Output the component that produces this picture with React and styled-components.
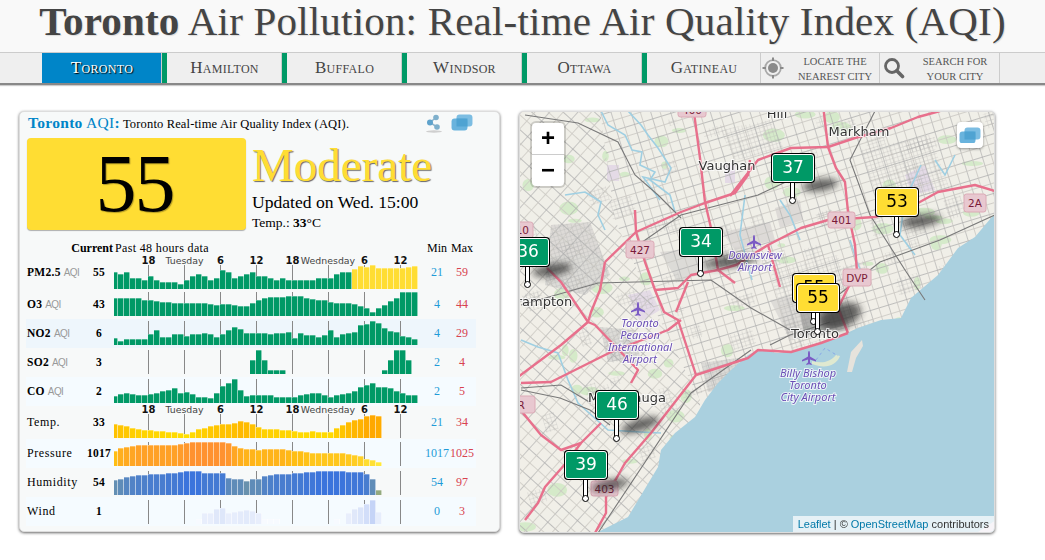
import React from "react";
import styled, { createGlobalStyle } from "styled-components";

const GlobalStyle = createGlobalStyle`
    html, body {
        margin: 0;
        background: #ffffff;
        font-family: "Liberation Serif", serif;
        overflow: hidden;
    }
`;

const GREEN = "#009966";
const YELLOW = "#ffdd33";

function mix(stops, h) {
    let a = stops[0];
    let b = stops[stops.length - 1];
    for (let i = 0; i < stops.length - 1; i++) {
        if (h >= stops[i][0] && h <= stops[i + 1][0]) {
            a = stops[i];
            b = stops[i + 1];
            break;
        }
    }
    const t = b[0] === a[0] ? 0 : Math.min(1, Math.max(0, (h - a[0]) / (b[0] - a[0])));
    const c = [0, 1, 2].map((k) => Math.round(a[1][k] + (b[1][k] - a[1][k]) * t));
    return `rgb(${c[0]},${c[1]},${c[2]})`;
}

const green = () => GREEN;
const pmColor = (i) => (i >= 40 ? YELLOW : GREEN);
const tempColor = (i, h) => mix([[4, [255, 224, 0]], [12, [255, 200, 0]], [23, [255, 168, 0]]], h);
const pressureColor = (i, h) => mix([[4, [255, 232, 60]], [15, [255, 190, 20]], [24, [255, 146, 48]]], h);
const humidityColor = (i, h) => mix([[5, [148, 170, 126]], [16, [95, 140, 184]], [24, [59, 116, 220]]], h);
const windColor = (i, h) => mix([[5, [247, 250, 255]], [11, [232, 238, 252]], [16, [222, 231, 250]], [24, [197, 212, 247]]], h);

const zeros = (n) => Array(n).fill(0);

const rows = [
    {
        name: "PM2.5", aqi: true, bold: true, value: 55, min: 21, max: 59, h: 27, pb: 1, tp: 2, color: pmColor, axis: -8,
        data: [17, 15, 17, 11, 11, 9, 13, 9, 7, 7, 7, 5, 9, 13, 15, 13, 9, 11, 19, 17, 11, 13, 15, 17,
            13, 13, 11, 9, 11, 9, 9, 9, 9, 9, 11, 11, 11, 15, 17, 17,
            20, 23, 22, 24, 21, 21, 21, 21, 21, 22, 23],
    },
    {
        name: "O3", aqi: true, bold: true, value: 43, min: 4, max: 44, h: 29, pb: 3, tp: 7, color: green,
        data: [18, 18, 18, 18, 18, 16, 16, 15, 14, 14, 13, 13, 13, 13, 13, 13, 12, 11, 12, 12, 11, 10, 10, 13,
            16, 18, 19, 19, 19, 20, 20, 20, 18, 17, 16, 16, 14, 13, 13, 13, 12, 10, 8, 4, 8, 11, 15, 18, 24, 24, 24],
    },
    {
        name: "NO2", aqi: true, bold: true, value: 6, min: 4, max: 29, h: 29, pb: 3, tp: 7, color: green, bg: "#eef6fc",
        data: [7, 4, 6, 6, 6, 6, 11, 15, 8, 8, 11, 11, 9, 11, 11, 12, 11, 8, 11, 15, 18, 16, 12, 12,
            12, 12, 11, 12, 12, 13, 7, 12, 10, 10, 8, 10, 15, 8, 11, 12, 13, 20, 21, 24, 22, 17, 14, 13, 9, 8, 6],
    },
    {
        name: "SO2", aqi: true, bold: true, value: 3, min: 2, max: 4, h: 29, pb: 3, tp: 7, color: green,
        data: [...zeros(23), 14, 24, 14, 4, 4, 4, ...zeros(16), 4, 14, 24, 24, 14, 0],
    },
    {
        name: "CO", aqi: true, bold: true, value: 2, min: 2, max: 5, h: 29, pb: 3, tp: 7, color: green, bg: "#f5fbff",
        data: [7, 9, 10, 9, 8, 8, 9, 10, 12, 13, 15, 10, 11, 9, 6, 6, 5, 10, 17, 20, 24, 13, 7, 8,
            8, 8, 8, 6, 6, 6, 6, 8, 9, 10, 10, 8, 6, 8, 9, 10, 12, 16, 18, 20, 16, 16, 15, 12, 10, 8, 8],
    },
    {
        name: "Temp.", value: 33, min: 21, max: 34, h: 33, pb: 1, tp: 9, color: tempColor, axis: -2,
        data: [14, 13, 12, 10, 9, 8, 8, 7, 7, 6, 6, 5, 4, 6, 9, 10, 12, 13, 14, 14, 15, 17, 16, 14,
            11, 9, 9, 9, 8, 8, 7, 6, 6, 7, 6, 6, 6, 10, 13, 16, 18, 19, 22, 23, 22],
    },
    {
        name: "Pressure", value: 1017, min: 1017, max: 1025, h: 29, pb: 2, tp: 7, color: pressureColor, bg: "#f5fbff",
        data: [15, 18, 19, 20, 21, 21, 21, 21, 21, 21, 21, 22, 23, 24, 24, 24, 24, 24, 24, 23, 20, 18, 17, 17,
            16, 17, 17, 17, 17, 16, 15, 15, 14, 13, 13, 13, 13, 13, 13, 12, 11, 10, 7, 6, 4],
    },
    {
        name: "Humidity", value: 54, min: 54, max: 97, h: 29, pb: 2, tp: 7, color: humidityColor,
        data: [15, 16, 18, 19, 20, 20, 21, 21, 21, 22, 22, 23, 24, 24, 24, 22, 22, 22, 22, 17, 16, 16, 14, 16,
            16, 19, 20, 21, 21, 21, 22, 22, 23, 23, 24, 24, 24, 24, 24, 23, 23, 23, 21, 16, 5],
    },
    {
        name: "Wind", value: 1, min: 0, max: 3, h: 29, pb: 2, tp: 7, color: windColor, bg: "#f5fbff",
        data: [...zeros(14), 5, 11, 11, 15, 16, 11, 12, 13, 14, 13, 11, 5, 5, 5, ...zeros(9), 5, 0, 11, 15, 17, 20, 24, 12],
    },
];

const axisLabels = [
    { x: 34.5, text: "18", strong: true },
    { x: 70.5, text: "Tuesday" },
    { x: 106.5, text: "6", strong: true },
    { x: 142.5, text: "12", strong: true },
    { x: 178.5, text: "18", strong: true },
    { x: 214, text: "Wednesday" },
    { x: 250.5, text: "6", strong: true },
    { x: 286.5, text: "12", strong: true },
];

function Chart({ values, color }) {
    return (
        <ChartSvg width="304" height="24" viewBox="0 0 304 24">
            {[0, 1, 2, 3, 4, 5, 6, 7].map((k) => (
                <line key={k} x1={34.5 + 36 * k} x2={34.5 + 36 * k} y1="0" y2="24" stroke="#888" />
            ))}
            {values.map((h, i) => {
                if (!h) return null;
                const x = i === 0 ? 0 : 4 + 6 * (i - 1);
                const w = i === 0 ? 4 : 6;
                return (
                    <g key={i}>
                        <rect x={x} y={24 - h} width={w} height={h} fill={color(i, h)} />
                        <rect x={x} y={24 - h} width={w} height="1" fill="#fff" opacity="0.3" />
                        <rect x={x + w - 1} y={24 - h} width="1" height={h} fill="#fff" opacity="0.55" />
                    </g>
                );
            })}
        </ChartSvg>
    );
}

function LayersIcon({ size = 22 }) {
    return (
        <svg width={size} height={size * 0.77} viewBox="0 0 22 17">
            <rect x="5.5" y="0.5" width="16" height="12" rx="3" fill="#7cbde2" />
            <rect x="0.5" y="4.5" width="16" height="12" rx="3" fill="#69b3dd" />
            <path d="M5.5 4.5h11v8h-11z" fill="#4fa3d2" />
        </svg>
    );
}

function ShareIcon() {
    return (
        <svg width="18" height="19" viewBox="0 0 18 19">
            <ellipse cx="9" cy="17.5" rx="8" ry="1.2" fill="#cfcfcf" />
            <path d="M11 3.5L5 8.5L12 13" fill="none" stroke="#8fb5cc" strokeWidth="1.5" />
            <circle cx="11" cy="3.5" r="2.8" fill="#7fb0cc" />
            <circle cx="5" cy="8.5" r="3" fill="#5fa3cc" />
            <circle cx="12" cy="13" r="2.8" fill="#7fb0cc" />
        </svg>
    );
}

function LocateIcon() {
    return (
        <svg width="24" height="24" viewBox="0 0 24 24">
            <circle cx="12" cy="12" r="5" fill="#8a8a8a" />
            <circle cx="12" cy="12" r="7.8" fill="none" stroke="#a8a8a8" strokeWidth="1.8" />
            <path d="M12 1.5v3.5M12 19v3.5M1.5 12h3.5M19 12h3.5" stroke="#8a8a8a" strokeWidth="2" />
        </svg>
    );
}

function SearchIcon() {
    return (
        <svg width="22" height="22" viewBox="0 0 22 22">
            <circle cx="9" cy="9" r="6.5" fill="none" stroke="#666" strokeWidth="2.8" />
            <path d="M13.8 13.8L19.5 19.5" stroke="#666" strokeWidth="3.6" strokeLinecap="round" />
        </svg>
    );
}

const PLANE = "M0,-7 C.8,-7 1,-5.5 1,-4 L1,-1.5 L7,2 L7,3.5 L1,1.5 L1,4.5 L2.7,6 L2.7,7 L0,6.2 L-2.7,7 L-2.7,6 L-1,4.5 L-1,1.5 L-7,3.5 L-7,2 L-1,-1.5 L-1,-4 C-1,-5.5 -.8,-7 0,-7Z";

const highways = [
    "M693 105L700 158L705 202L711 228L718 270",
    "M605 262L636 232L681 212L705 203L735 193L748 175L750 160",
    "M605 262L600 290L591 312L588 322",
    "M730 196L758 160L791 148L828 147L855 138L891 128L918 117L940 111",
    "M823 105L828 147L836 168L845 182L848 212L855 245L857 272L848 288L838 308L848 333",
    "M718 270L736 265L768 245L801 228L828 220L875 217L918 203L938 192L975 185L995 191",
    "M718 270L735 283",
    "M718 270L691 275L678 288L655 290L645 262L636 232L635 210",
    "M655 290L664 312L678 320L696 375",
    "M688 282L676 312",
    "M547 268L561 282L588 322L595 325L638 370L631 383",
    "M518 377L561 345L588 322",
    "M521 383L551 382L581 367L611 352L668 330L681 320",
    "M696 375L748 358L758 350L791 352L821 343L848 333",
    "M696 375L675 402L651 433L625 463L606 497L606 513L595 533",
    "M519 408L541 435L561 450L581 443L601 423",
    "M525 520L538 503L545 487L566 463L581 443",
    "M768 245L780 287",
];

const railways = [
    "M521 305L598 283L711 280L751 308L790 330",
    "M598 533L691 393L751 350",
    "M628 252L681 215L758 195L790 180",
    "M525 115L578 123L618 142L635 175L658 195L681 218",
    "M521 390L560 398L590 410L610 425",
    "M875 111L850 160L870 215L905 270L925 300",
    "M832 300L880 262L940 240L995 215",
    "M770 345L790 335L830 322",
    "M591 403L561 385L521 388",
];

const rivers = [
    "M601 111L608 125L625 135L632 150L642 152L640 165L655 172L650 180L670 195L675 212",
    "M628 111L641 125L648 135L658 148L671 168L665 182L643 177L660 200",
    "M565 195L585 192L601 202L598 215L605 230",
    "M521 340L538 347L558 353L568 380L578 403L608 430L640 432L661 433",
    "M921 165L905 200L900 235L915 255",
    "M955 155L945 175L935 160",
    "M850 240L857 262L865 280",
    "M780 200L790 215L800 240",
    "M745 195L740 235L752 280",
];

const shields = [
    { x: 678, y: 102, w: 28, h: 15, t: "400" },
    { x: 505, y: 222, w: 28, h: 16, t: "410" },
    { x: 626, y: 241, w: 28, h: 17, t: "427" },
    { x: 828, y: 212, w: 27, h: 16, t: "401" },
    { x: 843, y: 269, w: 28, h: 17, t: "DVP" },
    { x: 964, y: 194, w: 22, h: 18, t: "2A" },
    { x: 591, y: 481, w: 27, h: 15, t: "403" },
    { x: 471, y: 396, w: 64, h: 17, t: "407 ETR" },
];

const shadows = [
    { cx: 731, cy: 261, rx: 27, ry: 6, r: -8 },
    { cx: 552, cy: 270, rx: 20, ry: 6, r: -10 },
    { cx: 820, cy: 185, rx: 18, ry: 6, r: -8 },
    { cx: 921, cy: 221, rx: 20, ry: 6, r: -8 },
    { cx: 840, cy: 316, rx: 22, ry: 12, r: -20 },
    { cx: 640, cy: 425, rx: 20, ry: 6, r: -18 },
    { cx: 610, cy: 485, rx: 19, ry: 5, r: -12 },
];

// small seeded generator so the map texture is the same on every load
let seed = 17;
function rnd(a, b) {
    seed = (seed * 16807) % 2147483647;
    return a + ((seed % 10000) / 10000) * (b - a);
}

const greenBlobs = Array.from({ length: 90 }, () => ({
    cx: rnd(520, 995), cy: rnd(111, 530), rx: rnd(3, 11), ry: rnd(2, 7),
}));

const blockPatches = Array.from({ length: 110 }, () => {
    const x = rnd(520, 990);
    const y = rnd(111, 530);
    const w = rnd(8, 24);
    const h = rnd(6, 18);
    return `M${x} ${y}l${w} ${-w * 0.3}l${h * 0.3} ${h}l${-w} ${w * 0.3}Z`;
});

function BaseMap() {
    return (
        <MapSvg width="476" height="422" viewBox="520 112 476 422">
            <defs>
                <pattern id="gridEast" width="19" height="19" patternUnits="userSpaceOnUse" patternTransform="rotate(-17)">
                    <path d="M0 0H19M0 0V19" stroke="#aeaeae" strokeWidth="1.3" fill="none" />
                    <path d="M0 9.5H19M9.5 0V19" stroke="#c9c7c2" strokeWidth="0.8" fill="none" />
                </pattern>
                <pattern id="gridWest" width="21" height="21" patternUnits="userSpaceOnUse" patternTransform="rotate(42)">
                    <path d="M0 0H21M0 0V21" stroke="#aeaeae" strokeWidth="1.3" fill="none" />
                    <path d="M0 10.5H21M10.5 0V21" stroke="#cbc9c3" strokeWidth="0.8" fill="none" />
                </pattern>
                <pattern id="streets" width="4" height="4" patternUnits="userSpaceOnUse" patternTransform="rotate(-17)">
                    <path d="M0 0H4M0 0V4" stroke="#acacac" strokeWidth="0.7" fill="none" />
                </pattern>
                <filter id="soft" x="-40%" y="-80%" width="180%" height="260%">
                    <feGaussianBlur stdDeviation="3.5" />
                </filter>
            </defs>
            <rect x="519" y="111" width="477" height="423" fill="#f1efe8" />
            <g fill="#cfe9c2" opacity="0.8">
                {greenBlobs.map((b) => <ellipse key={b.cx} {...b} />)}
            </g>
            <g fill="#e4dbe6">
                <rect x="607" y="165" width="12" height="16" />
                <rect x="725" y="165" width="10" height="18" />
                <path d="M628 295L650 290L660 310L640 322Z" />
                <path d="M905 175L925 165L935 190L912 195Z" />
            </g>
            <g fill="#d4d3d0" opacity="0.7">
                <path d="M551 225L590 222L610 275L585 295L545 285Z" />
                <path d="M775 208L800 200L803 220L780 228Z" />
                <path d="M600 327L635 330L640 358L608 362Z" />
                <path d="M701 363L738 358L742 384L708 392Z" />
                <path d="M660 252L700 248L712 270L678 282Z" />
                <path d="M770 300L838 290L850 330L790 340Z" />
                <path d="M722 232L770 222L775 240L735 250Z" />
            </g>
            <polygon points="600,111 996,111 996,330 700,400 650,300 615,220" fill="url(#gridEast)" />
            <polygon points="519,111 600,111 615,220 650,300 700,400 700,534 519,534" fill="url(#gridWest)" />
            <g fill="url(#streets)" opacity="0.7">
                {blockPatches.map((d) => <path key={d} d={d} />)}
                <path d="M551 225L590 222L610 275L585 295L545 285Z" />
                <path d="M600 327L635 330L640 358L608 362Z" />
                <path d="M770 270L838 255L855 325L790 345Z" />
                <path d="M701 363L738 358L742 384L708 392Z" />
                <path d="M860 150L930 135L950 190L880 205Z" />
                <path d="M720 130L770 120L785 150L735 160Z" />
            </g>
            <path d="M798 305L835 292L846 325L805 336Z" fill="#8a8a8a" opacity="0.55" />
            <path
                d="M595 534L600 531L628 517L658 467L661 450L675 433L695 417L705 400L718 383L731 370L748 355L758 350L778 353L798 350L818 345L838 337L858 328L881 320L901 318L911 298L938 275L958 248L975 237L991 218L996 213V534Z"
                fill="#aad0df"
            />
            <path d="M812 364C825 369 836 366 840 356L836 355C830 362 822 364 812 361Z" fill="#dfe9d0" />
            <path d="M847 372L851 352L862 340L863 346L856 358L852 372Z" fill="#e6e3dc" />
            <g fill="none" stroke="#7f9ee8" strokeWidth="0.8" strokeDasharray="3 3">
                <path d="M816 360L825 348L838 356" />
            </g>
            <g fill="none" stroke="#9fcfe2" strokeWidth="1.6">
                {rivers.map((d) => <path key={d} d={d} />)}
            </g>
            <g fill="none" stroke="#797979" strokeWidth="1.1">
                {railways.map((d) => <path key={d} d={d} />)}
            </g>
            <g fill="none" stroke="#e8708c" strokeWidth="2.4" strokeLinejoin="round">
                {highways.map((d) => <path key={d} d={d} />)}
            </g>
            {shields.map((s) => (
                <g key={s.t}>
                    <rect x={s.x} y={s.y} width={s.w} height={s.h} rx="2.5" fill="#e8c8d0" stroke="#dcaab6" />
                    <ShieldText x={s.x + s.w / 2} y={s.y + s.h / 2 + 4}>{s.t}</ShieldText>
                </g>
            ))}
            <g fill="#2b2b2b" opacity="0.72" filter="url(#soft)">
                {shadows.map((s) => (
                    <ellipse key={s.cx} cx={s.cx} cy={s.cy} rx={s.rx} ry={s.ry} transform={`rotate(${s.r} ${s.cx} ${s.cy})`} />
                ))}
            </g>
            <PlaceName x="727" y="170">Vaughan</PlaceName>
            <PlaceName x="859" y="136">Markham</PlaceName>
            <PlaceName x="777" y="118">Hill</PlaceName>
            <PlaceName x="815" y="338">Toronto</PlaceName>
            <PlaceName x="540" y="306">Brampton</PlaceName>
            <PlaceName x="627" y="402">Mississauga</PlaceName>
            <path d={PLANE} transform="translate(638 309)" fill="#7b5bc4" />
            <path d={PLANE} transform="translate(754 242)" fill="#7b5bc4" />
            <path d={PLANE} transform="translate(809 358)" fill="#7b5bc4" />
            <AirportName x="640" y="327">Toronto</AirportName>
            <AirportName x="640" y="339">Pearson</AirportName>
            <AirportName x="640" y="351">International</AirportName>
            <AirportName x="640" y="363">Airport</AirportName>
            <AirportName x="755" y="259">Downsview</AirportName>
            <AirportName x="755" y="271">Airport</AirportName>
            <AirportName x="808" y="377">Billy Bishop</AirportName>
            <AirportName x="808" y="389">Toronto</AirportName>
            <AirportName x="808" y="401">City Airport</AirportName>
            <polygon points="975,534 996,534 996,520" fill="#e4dbe6" />
        </MapSvg>
    );
}

const pins = [
    { x: 793, top: 154, tip: 204, value: 37, bg: GREEN },
    { x: 897, top: 188, tip: 238, value: 53, bg: YELLOW },
    { x: 701, top: 228, tip: 277, value: 34, bg: GREEN },
    { x: 528, top: 238, tip: 288, value: 36, bg: GREEN },
    { x: 814, top: 274, tip: 325, value: 55, bg: YELLOW },
    { x: 818, top: 284, tip: 335, value: 55, bg: YELLOW },
    { x: 617, top: 391, tip: 442, value: 46, bg: GREEN },
    { x: 586, top: 451, tip: 502, value: 39, bg: GREEN },
];

export default function App() {
    return (
        <Page>
            <GlobalStyle />
            <TitleBar>
                <Title><b>Toronto</b> Air Pollution: Real-time Air Quality Index (AQI)</Title>
            </TitleBar>
            <Nav>
                <Tab $active>Toronto</Tab>
                <Tab>Hamilton</Tab>
                <Tab>Buffalo</Tab>
                <Tab>Windsor</Tab>
                <Tab>Ottawa</Tab>
                <Tab $last>Gatineau</Tab>
                <Tool $w={119}>
                    <LocateIcon />
                    <ToolText>Locate the<br />nearest city</ToolText>
                </Tool>
                <Tool $w={120} $pad={3}>
                    <SearchIcon />
                    <ToolText>Search for<br />your city</ToolText>
                </Tool>
            </Nav>
            <Main>
                <Card>
                    <CardHead>
                        <CardTitle>
                            <b>Toronto</b> AQI<b>:</b>
                            <small> Toronto Real-time Air Quality Index (AQI).</small>
                        </CardTitle>
                        <CardIcons>
                            <ShareIcon />
                            <LayersIcon />
                        </CardIcons>
                    </CardHead>
                    <Summary>
                        <ScoreBox>55</ScoreBox>
                        <Status>
                            <Level>Moderate</Level>
                            <Updated>Updated on Wed. 15:00</Updated>
                            <Temp>Temp.: <b>33</b>°C</Temp>
                        </Status>
                    </Summary>
                    <Table>
                        <HeadRow>
                            <HeadCurrent>Current</HeadCurrent>
                            <HeadPast>Past 48 hours data</HeadPast>
                            <HeadCell $pad>Min</HeadCell>
                            <HeadCell>Max</HeadCell>
                        </HeadRow>
                        {rows.map((row) => (
                            <Row key={row.name} $h={row.h} $bg={row.bg}>
                                <Label $tp={row.tp} $bold={row.bold}>
                                    {row.name}{row.aqi && <AqiTag>AQI</AqiTag>}
                                </Label>
                                <Value $tp={row.tp}>{row.value}</Value>
                                <ChartCell $pb={row.pb}>
                                    <Chart values={row.data} color={row.color} />
                                </ChartCell>
                                <MinCell $tp={row.tp}>{row.min}</MinCell>
                                <MaxCell $tp={row.tp}>{row.max}</MaxCell>
                                {row.axis !== undefined && (
                                    <Axis $top={row.axis}>
                                        {axisLabels.map((a) => (
                                            <AxisLabel key={a.text + a.x} $x={a.x} $strong={a.strong}>{a.text}</AxisLabel>
                                        ))}
                                    </Axis>
                                )}
                            </Row>
                        ))}
                    </Table>
                </Card>
                <MapCard>
                    <BaseMap />
                    {pins.map((p) => (
                        <Pin key={p.x} $x={p.x - 520} $top={p.top - 112} $len={p.tip - p.top - 28}>
                            <PinBadge $bg={p.bg}>{p.value}</PinBadge>
                        </Pin>
                    ))}
                    <ZoomControl>
                        <ZoomButton>+</ZoomButton>
                        <ZoomButton>−</ZoomButton>
                    </ZoomControl>
                    <LayerButton><LayersIcon /></LayerButton>
                    <Attribution>
                        <a>Leaflet</a> | © <a>OpenStreetMap</a> contributors
                    </Attribution>
                </MapCard>
            </Main>
        </Page>
    );
}

const Page = styled.div`
    width: 1045px;
    height: 560px;
    overflow: hidden;
`;

const TitleBar = styled.header`
    height: 52px;
    background: #f9f9f9;
    text-align: center;
`;

const Title = styled.h1`
    margin: 0;
    font-size: 41px;
    line-height: 42px;
    font-weight: normal;
    letter-spacing: 0.2px;
    color: #444444;
    white-space: nowrap;
    text-shadow: 1px 1px 1px rgba(0, 0, 0, 0.12);
`;

const Nav = styled.nav`
    display: flex;
    height: 30px;
    padding-left: 42px;
    background: #efefef;
    border-top: 1px solid #cccccc;
    border-bottom: 2px solid #888888;
    box-shadow: 0 1px 1px rgba(0, 0, 0, 0.2);
`;

const Tab = styled.a`
    box-sizing: border-box;
    width: ${(p) => (p.$last ? "119px" : "120px")};
    border-left: ${(p) => (p.$active ? "0" : `5px solid ${GREEN}`)};
    box-shadow: inset -1px 0 0 #cccccc;
    background: ${(p) => (p.$active ? "#0085c8" : "transparent")};
    color: ${(p) => (p.$active ? "#ffffff" : "#444444")};
    font-size: 17px;
    font-variant: small-caps;
    letter-spacing: 0.3px;
    line-height: 30px;
    text-align: center;
    text-shadow: ${(p) => (p.$active ? "1px 1px 1px #000" : "none")};
`;

const Tool = styled.div`
    display: flex;
    align-items: center;
    box-sizing: border-box;
    width: ${(p) => p.$w}px;
    padding-left: ${(p) => p.$pad || 0}px;
    border-right: 1px solid #cccccc;
`;

const ToolText = styled.div`
    flex: 1;
    margin-top: 1px;
    padding-left: 6px;
    font-size: 10.5px;
    line-height: 15px;
    text-align: center;
    text-transform: uppercase;
    color: #555555;
`;

const Main = styled.main`
    display: flex;
    gap: 19px;
    padding: 26px 0 0 19px;
`;

const Card = styled.section`
    box-sizing: border-box;
    width: 481px;
    height: 421px;
    padding: 0 0 0 7px;
    background: #f7f9f9;
    border: 1px solid #dddddd;
    border-radius: 5px;
    box-shadow: 0 1px 3px rgba(0, 0, 0, 0.6);
`;

const CardHead = styled.div`
    display: flex;
    justify-content: space-between;
    height: 26px;
`;

const CardTitle = styled.div`
    padding: 2px 0 0 1px;
    font-size: 15.5px;
    line-height: 18px;
    letter-spacing: 0.3px;
    color: #0085c8;

    b {
        font-weight: bold;
    }

    small {
        font-size: 12.5px;
        letter-spacing: 0.15px;
        color: #000000;
    }
`;

const CardIcons = styled.div`
    display: flex;
    align-items: flex-start;
    gap: 8px;
    padding: 2px 26px 0 0;
`;

const Summary = styled.div`
    display: flex;
    gap: 6px;
    height: 92px;
`;

const ScoreBox = styled.div`
    box-sizing: border-box;
    width: 219px;
    height: 92px;
    padding-right: 4px;
    background: ${YELLOW};
    border-radius: 4px;
    box-shadow: 0 1px 1px rgba(0, 0, 0, 0.3);
    color: #000000;
    font-size: 82px;
    line-height: 92px;
    text-align: center;
    letter-spacing: -2px;
    text-shadow: 1px 1px 1px rgba(0, 0, 0, 0.3);
`;

const Status = styled.div`
    display: flex;
    flex-direction: column;
`;

const Level = styled.div`
    margin-top: 4px;
    height: 46px;
    font-size: 47px;
    line-height: 46px;
    color: ${YELLOW};
    text-shadow: 1px 1px 1px #666666;
`;

const Updated = styled.div`
    margin-top: 3px;
    font-size: 17.6px;
    line-height: 22px;
    color: #000000;
`;

const Temp = styled.div`
    margin-top: 2px;
    font-size: 13.5px;
    line-height: 16px;
    color: #000000;
`;

const Table = styled.div`
    margin: 12px 0 0 -1px;
    width: 450px;
`;

const HeadRow = styled.div`
    display: grid;
    grid-template-columns: 86px 305px 32px 24px;
    height: 21px;
    padding-left: 1px;
    font-size: 12px;
    line-height: 12px;
    color: #000000;
`;

const HeadCurrent = styled.b`
    text-align: right;
`;

const HeadPast = styled.span`
    padding-left: 2px;
    letter-spacing: 0.35px;
`;

const HeadCell = styled.span`
    padding-left: ${(p) => (p.$pad ? "6px" : "0")};
    text-align: center;
    white-space: nowrap;
`;

const Row = styled.div`
    position: relative;
    display: grid;
    grid-template-columns: 58px 28px 305px 32px 24px;
    height: ${(p) => p.$h}px;
    padding-left: 1px;
    background: ${(p) => p.$bg || "transparent"};
    font-size: 12px;
    line-height: 14px;
    color: #000000;
`;

const Label = styled.div`
    padding-top: ${(p) => p.$tp}px;
    font-size: ${(p) => (p.$bold ? "11.5px" : "12px")};
    font-weight: ${(p) => (p.$bold ? "bold" : "normal")};
    letter-spacing: ${(p) => (p.$bold ? "0.3px" : "0.6px")};
    white-space: nowrap;
`;

const AqiTag = styled.span`
    margin-left: 3px;
    font-family: "Liberation Sans", sans-serif;
    font-size: 10px;
    font-weight: normal;
    letter-spacing: -0.6px;
    color: #999999;
`;

const Value = styled.div`
    padding-top: ${(p) => p.$tp}px;
    font-size: 11.5px;
    font-weight: bold;
    letter-spacing: 0.3px;
    text-align: center;
`;

const ChartCell = styled.div`
    align-self: end;
    justify-self: end;
    height: 24px;
    margin-bottom: ${(p) => p.$pb}px;
`;

const ChartSvg = styled.svg`
    display: block;
`;

const MinCell = styled.div`
    padding: ${(p) => p.$tp}px 0 0 6px;
    color: #1f9bd8;
    text-align: center;
`;

const MaxCell = styled.div`
    padding-top: ${(p) => p.$tp}px;
    color: #d8434f;
    text-align: center;
`;

const Axis = styled.div`
    position: absolute;
    left: 88px;
    top: ${(p) => p.$top}px;
    width: 304px;
    height: 12px;
`;

const AxisLabel = styled.span`
    position: absolute;
    left: ${(p) => p.$x}px;
    transform: translateX(-50%);
    font-family: "DejaVu Sans", sans-serif;
    font-size: ${(p) => (p.$strong ? "10px" : "9.4px")};
    font-weight: ${(p) => (p.$strong ? "bold" : "normal")};
    line-height: 12px;
    color: ${(p) => (p.$strong ? "#111111" : "#444444")};
`;

const MapCard = styled.section`
    position: relative;
    box-sizing: border-box;
    width: 476px;
    height: 422px;
    overflow: hidden;
    background: #f2efe9;
    border: 1px solid #dddddd;
    border-radius: 5px;
    box-shadow: 0 1px 3px rgba(0, 0, 0, 0.6);
`;

const MapSvg = styled.svg`
    display: block;
`;

const PlaceName = styled.text`
    font-family: "DejaVu Sans", sans-serif;
    font-size: 13px;
    fill: #333333;
    text-anchor: middle;
    paint-order: stroke;
    stroke: rgba(255, 255, 255, 0.75);
    stroke-width: 2px;
`;

const AirportName = styled.text`
    font-family: "Noto Sans", sans-serif;
    font-size: 11px;
    font-style: italic;
    fill: #6a4fb5;
    text-anchor: middle;
    paint-order: stroke;
    stroke: rgba(255, 255, 255, 0.75);
    stroke-width: 2px;
`;

const ShieldText = styled.text`
    font-family: "DejaVu Sans", sans-serif;
    font-size: 10.5px;
    fill: #7a1a38;
    text-anchor: middle;
`;

const Pin = styled.div`
    position: absolute;
    left: ${(p) => p.$x - 21}px;
    top: ${(p) => p.$top}px;
    width: 42px;

    &::before {
        content: "";
        position: absolute;
        left: 18px;
        top: 27px;
        box-sizing: border-box;
        width: 5px;
        height: ${(p) => p.$len}px;
        background: #ffffff;
        border: solid #000000;
        border-width: 0 1px;
    }

    &::after {
        content: "";
        position: absolute;
        left: 17px;
        top: ${(p) => 21 + p.$len}px;
        box-sizing: border-box;
        width: 7px;
        height: 7px;
        background: #ffffff;
        border: 1px solid #000000;
        border-radius: 50%;
    }
`;

const PinBadge = styled.div`
    position: relative;
    z-index: 1;
    box-sizing: border-box;
    width: 42px;
    height: 28px;
    background: ${(p) => p.$bg};
    border: 1px solid #ffffff;
    border-radius: 3px;
    box-shadow: 0 0 0 1px #000000;
    color: ${(p) => (p.$bg === GREEN ? "#ffffff" : "#000000")};
    font-family: "DejaVu Sans", sans-serif;
    font-size: 17px;
    line-height: 25px;
    text-align: center;
`;

const ZoomControl = styled.div`
    position: absolute;
    left: 12px;
    top: 11px;
    width: 32px;
    background: #ffffff;
    border-radius: 4px;
    box-shadow: 0 0 0 2px rgba(0, 0, 0, 0.15);
`;

const ZoomButton = styled.div`
    height: 31px;
    border-bottom: 1px solid #cccccc;
    color: #000000;
    font-family: "Liberation Sans", sans-serif;
    font-size: 24px;
    font-weight: bold;
    line-height: 30px;
    text-align: center;

    &:last-child {
        border-bottom: 0;
    }
`;

const LayerButton = styled.div`
    position: absolute;
    right: 11px;
    top: 10px;
    display: flex;
    align-items: center;
    justify-content: center;
    width: 26px;
    height: 26px;
    background: #ffffff;
    border-radius: 4px;
    box-shadow: 0 1px 3px rgba(0, 0, 0, 0.4);
`;

const Attribution = styled.div`
    position: absolute;
    right: 0;
    bottom: 0;
    padding: 0 5px;
    background: rgba(255, 255, 255, 0.7);
    color: #333333;
    font-family: "Liberation Sans", sans-serif;
    font-size: 11px;
    line-height: 16px;

    a {
        color: #0078a8;
    }
`;
